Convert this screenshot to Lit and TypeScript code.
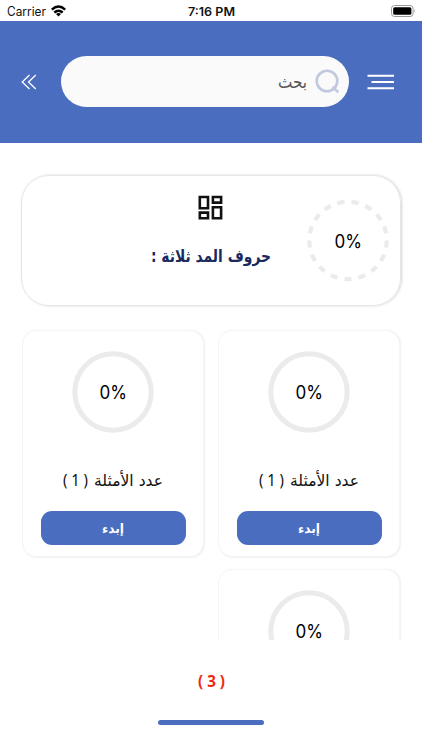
import { LitElement, html, svg, css } from "lit";
import { customElement, property } from "lit/decorators.js";

/** One line of text, centred in its box and fitted to a known width. */
@customElement("fit-text")
class FitText extends LitElement {
  @property() text = "";
  @property({ type: Number }) w = 100;
  @property({ type: Number }) h = 24;
  @property({ type: Number }) base = 18;
  @property() dir = "rtl";

  static styles = css`
    :host { display: block; }
    svg { display: block; overflow: visible; }
    text { fill: currentColor; white-space: pre; }
  `;

  render() {
    return html`<svg width=${this.w} height=${this.h}>
      <text x=${this.w / 2} y=${this.base} text-anchor="middle" direction=${this.dir}
        textLength=${this.w} lengthAdjust="spacingAndGlyphs">${this.text}</text>
    </svg>`;
  }
}

@customElement("progress-ring")
class ProgressRing extends LitElement {
  @property({ type: Number }) value = 0;
  @property({ type: Boolean }) dashed = false;

  static styles = css`
    :host { display: block; width: 82px; height: 82px; }
    svg { display: block; }
    .track { fill: none; stroke: #ebebeb; stroke-width: 5; }
    .dashed { stroke-width: 4.2; }
    text { font: 18.2px Inter, "Liberation Sans", sans-serif; fill: #000; }
  `;

  render() {
    return html`<svg width="82" height="82" viewBox="0 0 82 82">
      ${this.dashed
        ? svg`<circle class="track dashed" cx="41" cy="40.5" r="38.7" pathLength="170"
            stroke-dasharray="5 5" stroke-dashoffset="2.5" transform="rotate(90 41 40.5)" />`
        : svg`<circle class="track" cx="41" cy="41" r="38.2" />`}
      <text x="41.3" y="47.5" text-anchor="middle" textLength="27.5" lengthAdjust="spacingAndGlyphs">${this.value}%</text>
    </svg>`;
  }
}

@customElement("lesson-card")
class LessonCard extends LitElement {
  @property({ type: Number }) count = 1;
  @property({ type: Number }) value = 0;

  static styles = css`
    :host {
      display: flex; flex-direction: column; align-items: center; box-sizing: border-box;
      height: 227px; padding-top: 20px; border: 1px solid #f5f5f5; border-radius: 14px;
      background: #fff; box-shadow: 1px 0.5px 1.5px rgba(0, 0, 0, 0.06);
    }
    .label {
      display: flex; direction: rtl; gap: 6px; margin-top: 35px;
      font: 16px "DejaVu Sans", sans-serif; color: #111;
    }
    .count { font-family: "Noto Sans", sans-serif; }
    button {
      display: flex; justify-content: center; align-items: center; width: 145px; height: 34px;
      margin: 18px 0 0; padding: 0; border: 0; border-radius: 11px; background: #4a6dc0;
      color: #fff; font: bold 13px "DejaVu Sans", sans-serif;
    }
  `;

  render() {
    return html`
      <progress-ring .value=${this.value}></progress-ring>
      <div class="label">
        <fit-text .text=${"عدد الأمثلة"} .w=${69} .h=${25} .base=${17.5}></fit-text>
        <fit-text class="count" .text=${`( ${this.count} )`} .w=${25} .h=${25} .base=${17.5}></fit-text>
      </div>
      <button><fit-text .text=${"إبدء"} .w=${22} .h=${20} .base=${14.5}></fit-text></button>
    `;
  }
}

@customElement("app-root")
class AppRoot extends LitElement {
  static styles = css`
    :host {
      display: flex; flex-direction: column; width: 422px; height: 750px; overflow: hidden;
      background: #fff; font-family: Inter, "Liberation Sans", sans-serif;
    }
    svg { display: block; }
    .status {
      display: grid; grid-template-columns: 1fr auto 1fr; align-items: center;
      flex: none; height: 21px; box-sizing: border-box; padding: 0 6px 0 7px; color: #111;
    }
    .carrier { display: flex; align-items: center; gap: 5px; font-size: 12.5px; }
    .time { font-size: 12px; font-weight: 600; }
    .battery { justify-self: end; }
    .header {
      display: flex; align-items: center; flex: none; height: 122px; box-sizing: border-box;
      padding: 0 27px 1px 21px; background: #4a6dc0;
    }
    .search {
      display: flex; align-items: center; justify-content: flex-end; gap: 7px;
      width: 288px; height: 51px; box-sizing: border-box; margin: 0 18px 0 24px;
      padding-right: 9px; border-radius: 26px; background: #fafafa;
      color: #555; font: 17.5px "DejaVu Sans", sans-serif;
    }
    .scroll { flex: none; height: 497px; box-sizing: border-box; padding: 32px 21px 0 20px; overflow: hidden; }
    .summary {
      display: grid; grid-template-columns: 1fr 130px 1fr; height: 131px; box-sizing: border-box;
      margin-left: 1px; border: 1px solid #e6e6e6; border-radius: 28px;
      box-shadow: 1px 0 2.5px rgba(0, 0, 0, 0.17);
    }
    .middle { grid-column: 2; display: flex; flex-direction: column; align-items: center; padding: 19px 1px 0 0; }
    .title { margin-top: 22px; color: #1b2a5e; font: bold 17px "DejaVu Sans", sans-serif; }
    .summary progress-ring { justify-self: end; margin: 24px 11px 0 0; }
    .grid {
      display: grid; grid-template-columns: 182px 182px; direction: rtl;
      gap: 12px 14px; padding: 24px 1px 0;
    }
    .footer { flex: 1; display: flex; flex-direction: column; align-items: center; padding-top: 30px; }
    .total { color: #f02810; font: bold 16px "Noto Sans", sans-serif; }
    .home { width: 106px; height: 5px; margin-top: 26px; border-radius: 3px; background: #4a6dc0; }
  `;

  render() {
    return html`
      <div class="status">
        <div class="carrier">
          <fit-text .text=${"Carrier"} .w=${39} .h=${16} .base=${13} dir="ltr"></fit-text>
          <svg width="15" height="12" viewBox="0 0 15 12" fill="none" stroke="#000" stroke-width="2.4">
            <path d="M.8 4.7Q7.5-1.5 14.2 4.7M3.3 7.5Q7.5 3.8 11.7 7.5" />
            <path d="M7.5 11.4 5 9Q7.5 7 10 9Z" fill="#000" stroke="none" />
          </svg>
        </div>
        <div class="time"><fit-text .text=${"7:16 PM"} .w=${47} .h=${16} .base=${13} dir="ltr"></fit-text></div>
        <svg class="battery" width="25" height="12" viewBox="0 0 25 12">
          <rect x=".5" y=".5" width="21.6" height="11" rx="3" fill="#fff" stroke="#999" />
          <rect x="2.2" y="2.2" width="18.2" height="7.6" rx="1.6" fill="#000" />
          <path d="M23.4 4.2q1.4 1.8 0 3.6z" fill="#999" />
        </svg>
      </div>
      <div class="header">
        <svg width="16" height="16" viewBox="0 0 16 16" fill="none" stroke="#fff" stroke-width="1.3">
          <path d="M8.5 1 1.2 8l7.3 7M14.8 1 7.5 8l7.3 7" />
        </svg>
        <div class="search">
          <fit-text .text=${"بحث"} .w=${29} .h=${28} .base=${20}></fit-text>
          <svg width="26" height="26" viewBox="0 0 26 26" fill="none" stroke="#c2c8de">
            <circle cx="13" cy="12" r="10.3" stroke-width="2.6" />
            <path d="m18.5 18 5.8 5.3" stroke-width="2.6" />
          </svg>
        </div>
        <svg width="27" height="16" viewBox="0 0 27 16" stroke="#fff" stroke-width="2">
          <path d="M.5 1.8h26.5M4.5 8h22.5M.5 14.2h26.5" />
        </svg>
      </div>
      <div class="scroll">
        <div class="summary">
          <div class="middle">
            <svg width="25" height="25" viewBox="0 0 25 25" fill="none" stroke="#111" stroke-width="2.6">
              <path d="M1.8 2h8.2v11.2H1.8zM14.9 2h8.2v5.6h-8.2zM1.8 17.6h8.2v5.6H1.8zM14.9 12.2h8.2v11h-8.2z" />
            </svg>
            <fit-text class="title" .text=${"حروف المد ثلاثة :"} .w=${120} .h=${28} .base=${20}></fit-text>
          </div>
          <progress-ring dashed></progress-ring>
        </div>
        <div class="grid">
          <lesson-card></lesson-card>
          <lesson-card></lesson-card>
          <lesson-card></lesson-card>
        </div>
      </div>
      <div class="footer">
        <fit-text class="total" .text=${"( 3 )"} .w=${27} .h=${24} .base=${17}></fit-text>
        <div class="home"></div>
      </div>
    `;
  }
}
